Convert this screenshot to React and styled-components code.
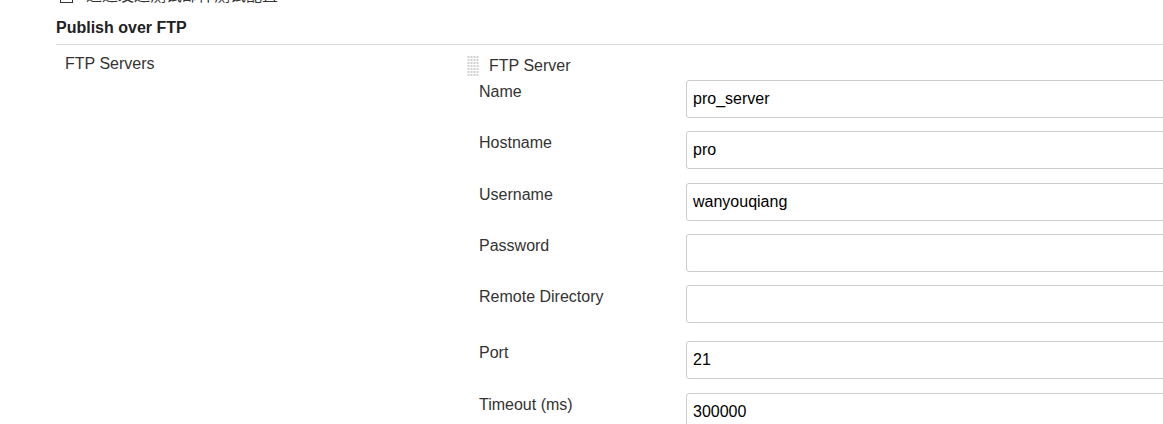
import React from "react";
import styled, { createGlobalStyle } from "styled-components";

const GlobalStyle = createGlobalStyle`
  body {
    margin: 0;
    background: #fff;
    overflow: hidden;
    font-family: "Liberation Sans", Arial, "Noto Sans CJK SC", sans-serif;
    font-size: 16px;
    color: #333;
  }
`;

const Page = styled.div`
  padding-left: 56px;
  width: 1200px;
`;

const CheckRow = styled.div`
  display: flex;
  align-items: center;
  gap: 13px;
  height: 18px;
  margin-top: -13px;
  padding-left: 4px;
  line-height: 18px;
`;

const Box = styled.span`
  width: 13px;
  height: 13px;
  border: 1px solid #333;
  box-sizing: border-box;
  background: #fff;
`;

const SectionHeader = styled.div`
  margin-top: 14px;
  font-weight: bold;
  font-size: 16px;
  color: #222;
  line-height: 18px;
  padding-bottom: 7px;
  border-bottom: 1px solid #dcdcdc;
`;

const SettingRow = styled.div`
  display: flex;
  padding-top: 10px;
`;

const SettingName = styled.div`
  width: 402px;
  padding-left: 9px;
  line-height: 18px;
  flex-shrink: 0;
`;

const Repeated = styled.div`
  display: flex;
  flex-direction: column;
`;

const ChunkHeader = styled.div`
  display: flex;
  align-items: center;
  gap: 9px;
  height: 20px;
  margin-top: 1px;
  line-height: 18px;
  color: #333;
`;

const Fields = styled.div`
  display: grid;
  grid-template-columns: 207px 520px;
  padding-left: 12px;
  margin-top: 4px;
`;

const Label = styled.div`
  padding-top: 3px;
  line-height: 18px;
  color: #333;
  margin-top: ${({ $extra }) => $extra || 0}px;
`;

const Input = styled.input`
  box-sizing: border-box;
  height: 38px;
  margin: 0 0 13.3px;
  margin-top: ${({ $extra }) => $extra || 0}px;
  padding: 0 6px;
  border: 1px solid #ccc;
  border-radius: 3px;
  font-family: inherit;
  font-size: 16px;
  color: #000;
  background: #fff;
  outline: none;
`;

const Handle = () => (
  <svg width="13" height="21" viewBox="0 0 13 21">
    {Array.from({ length: 7 }).map((_, r) =>
      Array.from({ length: 4 }).map((_, c) => (
        <rect
          key={`${r}-${c}`}
          x={c * 3 + 0.5}
          y={r * 3}
          width="2"
          height="2"
          fill="#d2d2d2"
        />
      ))
    )}
  </svg>
);

const fields = [
  { label: "Name", value: "pro_server" },
  { label: "Hostname", value: "pro" },
  { label: "Username", value: "wanyouqiang" },
  { label: "Password", value: "", type: "password" },
  { label: "Remote Directory", value: "" },
  { label: "Port", value: "21", extra: 5 },
  { label: "Timeout (ms)", value: "300000" },
];

export default function App() {
  return (
    <>
      <GlobalStyle />
      <Page>
        <CheckRow>
          <Box />
          <span>通过发送测试邮件测试配置</span>
        </CheckRow>
        <SectionHeader>Publish over FTP</SectionHeader>
        <SettingRow>
          <SettingName>FTP Servers</SettingName>
          <Repeated>
            <ChunkHeader>
              <Handle />
              <span>FTP Server</span>
            </ChunkHeader>
            <Fields>
              {fields.map((f) => (
                <React.Fragment key={f.label}>
                  <Label $extra={f.extra}>{f.label}</Label>
                  <Input
                    $extra={f.extra}
                    type={f.type || "text"}
                    defaultValue={f.value}
                  />
                </React.Fragment>
              ))}
            </Fields>
          </Repeated>
        </SettingRow>
      </Page>
    </>
  );
}
